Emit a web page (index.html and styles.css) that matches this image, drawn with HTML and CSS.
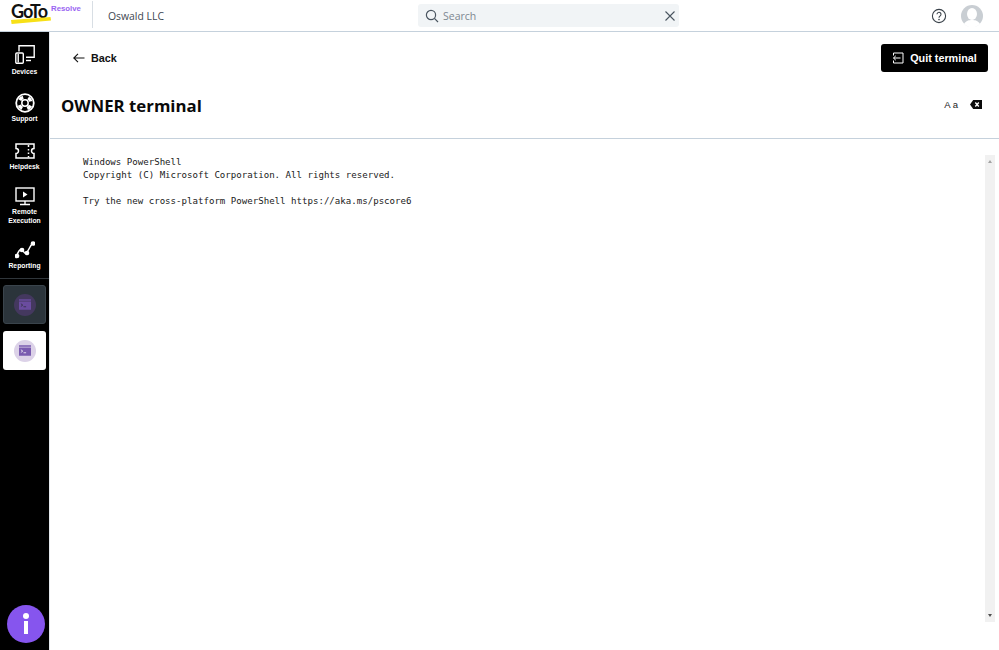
FILE: index.html
```html
<!DOCTYPE html>
<html lang="en">
<head>
<meta charset="utf-8">
<title>OWNER terminal</title>
<link rel="stylesheet" href="styles.css">
</head>
<body>
<header class="topbar">
  <div class="brand">
    <div class="logo">
      <span class="logo-word">GoTo</span>
      <svg class="logo-swoosh" viewBox="0 0 40 7" width="40" height="7"><path d="M0 3 39.500 0 40 3.400 .6 7z" fill="#f7e017"/></svg>
      <span class="logo-product">Resolve</span>
    </div>
    <div class="company">Oswald LLC</div>
  </div>
  <div class="search">
    <svg class="search-icon" viewBox="0 0 14 14" width="14" height="14"><circle cx="6" cy="6" r="4.600" fill="none" stroke="#4a5560" stroke-width="1.200"/><path d="M9.400 9.400 13 13" stroke="#4a5560" stroke-width="1.200"/></svg>
    <span class="search-text">Search</span>
    <svg class="search-clear" viewBox="0 0 10 10" width="10" height="10"><path d="M.5.5l9 9M9.500.5l-9 9" stroke="#4a5560" stroke-width="1.100"/></svg>
  </div>
  <div class="account">
    <svg viewBox="0 0 16 16" width="16" height="16"><circle cx="8" cy="8" r="6.600" fill="none" stroke="#3a424a" stroke-width="1.100"/><path d="M6 6.300a2 2 0 1 1 3.200 1.600C8.400 8.500 8 8.800 8 9.800" fill="none" stroke="#3a424a" stroke-width="1.100"/><circle cx="8" cy="11.600" r=".8" fill="#3a424a"/></svg>
    <svg class="avatar" viewBox="0 0 22 22" width="22" height="22"><circle cx="11" cy="11" r="11" fill="#c9ced3"/><ellipse cx="11" cy="9" rx="5" ry="6" fill="#fff"/><path d="M3 19c2-3.500 5-4 8-4s6 .5 8 4a11 11 0 0 1-16 0z" fill="#fff"/></svg>
  </div>
</header>
<div class="shell">
  <nav class="sidebar">
    <a class="nav-item nav-devices">
      <svg viewBox="0 0 20 19" width="20" height="19" fill="none" stroke="#fff" stroke-width="1.400"><path d="M4 6.500V.8h15.200v11.500H11"/><rect x=".8" y="8" width="7.500" height="10.200" rx="1"/><path d="M3.200 9v8.500"/><path d="M11 15.500h5"/></svg>
      <span>Devices</span>
    </a>
    <a class="nav-item nav-support">
      <svg viewBox="0 0 20 20" width="20" height="20" fill="none" stroke="#fff"><circle cx="10" cy="10" r="8.800" stroke-width="1.800"/><circle cx="10" cy="10" r="3.200" stroke-width="1.500"/><circle cx="10" cy="10" r="6" stroke-width="3.400" stroke-dasharray="4.200 5.220" stroke-dashoffset="6.810"/></svg>
      <span>Support</span>
    </a>
    <a class="nav-item nav-helpdesk">
      <svg viewBox="0 0 20 16" width="20" height="16" fill="none" stroke="#fff" stroke-width="1.500"><path d="M1 1h18v4.500a2.500 2.500 0 0 0 0 5V15H1v-4.500a2.500 2.500 0 0 0 0-5z"/><path d="M13.500 2v2M13.500 6v1.500M13.500 9.500V11M13.500 13v1.500"/></svg>
      <span>Helpdesk</span>
    </a>
    <a class="nav-item nav-remote">
      <svg viewBox="0 0 20 19" width="20" height="19" fill="none" stroke="#fff" stroke-width="1.400"><rect x="1" y="1" width="18" height="13"/><path d="M8 4.500v6l4.500-3z" fill="#fff" stroke="none"/><path d="M10 14v3M5 17.500h10"/></svg>
      <span>Remote Execution</span>
    </a>
    <a class="nav-item nav-reporting">
      <svg viewBox="0 0 20 18" width="20" height="18" fill="none" stroke="#fff" stroke-width="1.500"><path d="M2 15c1-5 3-7 5-6s2 4 4 3 4-7 6-9"/><circle cx="2" cy="15" r="1.600" fill="#fff"/><circle cx="7" cy="9" r="1.600" fill="#fff"/><circle cx="12" cy="12" r="1.600" fill="#fff"/><circle cx="18" cy="2.500" r="1.600" fill="#fff"/></svg>
      <span>Reporting</span>
    </a>
    <div class="session-list">
      <a class="session session-inactive">
        <span class="session-disc">
          <svg viewBox="0 0 16 14" width="16" height="14"><path d="M0 0h16v2H0z" fill="#6a4c9f"/><path d="M0 3h16v11H0z" fill="#6a4c9f"/><path d="M2.500 6l2.500 1.800L2.500 9.600M6 10h3.500" fill="none" stroke="#2b2d3a" stroke-width="1"/></svg>
        </span>
      </a>
      <a class="session session-active">
        <span class="session-disc">
          <svg viewBox="0 0 16 14" width="16" height="14"><path d="M0 0h16v2H0z" fill="#7a5bb0"/><path d="M0 3h16v11H0z" fill="#7a5bb0"/><path d="M2.500 6l2.500 1.800L2.500 9.600M6 10h3.500" fill="none" stroke="#fff" stroke-width="1"/></svg>
        </span>
      </a>
    </div>
    <div class="info-badge"><span class="info-dot"></span><span class="info-stem"></span></div>
  </nav>
  <main class="content">
    <div class="toolbar">
      <a class="back">
        <svg viewBox="0 0 12 10" width="12" height="10" fill="none" stroke="#111" stroke-width="1.100"><path d="M11.500 5H.8M5 .8.800 5 5 9.200"/></svg>
        <span>Back</span>
      </a>
      <button class="quit">
        <svg viewBox="0 0 12 12" width="12" height="12" fill="none" stroke="#fff" stroke-width="1"><path d="M1.500 3.500V1h9.500v10H1.500V8.500"/><path d="M8.500 6H1.500M3.800 3.800 1.500 6l2.300 2.200"/></svg>
        <span>Quit terminal</span>
      </button>
    </div>
    <div class="title-row">
      <h1>OWNER terminal</h1>
      <div class="title-tools">
        <span class="font-size">A a</span>
        <svg viewBox="0 0 12 9" width="12" height="9"><path d="M3.200 0H12v9H3.200L0 4.500z" fill="#0a0a0a"/><path d="M5.300 2.500l3.500 4M8.800 2.500l-3.500 4" stroke="#fff" stroke-width="1.300"/></svg>
      </div>
    </div>
    <div class="terminal">
      <pre class="terminal-text">Windows PowerShell
Copyright (C) Microsoft Corporation. All rights reserved.

Try the new cross-platform PowerShell https://aka.ms/pscore6</pre>
      <div class="scrollbar">
        <span class="arrow arrow-up"></span>
        <span class="arrow arrow-down"></span>
      </div>
    </div>
  </main>
</div>
</body>
</html>
```
FILE: styles.css
```css
* { box-sizing: border-box; }
html, body { height: 100%; }
body {
  margin: 0;
  height: 650px;
  overflow: hidden;
  display: flex;
  flex-direction: column;
  background: #fff;
  color: #0a0a0a;
  font-family: "Liberation Sans", Arial, sans-serif;
}
.topbar {
  height: 32px;
  flex: none;
  display: grid;
  grid-template-columns: 418px 261px 1fr;
  align-items: center;
  border-bottom: 1px solid #c5d1dc;
  background: #fff;
}
.brand { display: flex; align-items: center; height: 31px; }
.logo {
  position: relative;
  width: 93px;
  height: 27px;
  margin-top: -2px;
  border-right: 1px solid #d8dee4;
}
.logo-word {
  position: absolute;
  left: 11px;
  top: 1px;
  font-family: "Lato", sans-serif;
  font-size: 18px;
  font-weight: 700;
  letter-spacing: -1px;
  color: #111;
  line-height: 18px;
}
.logo-swoosh { position: absolute; left: 11px; top: 16px; }
.logo-product {
  position: absolute;
  left: 51px;
  top: 2px;
  font-size: 7.800px;
  font-weight: 700;
  color: #9a66f2;
  line-height: 11px;
}
.company {
  margin-left: 15px;
  font-family: "Open Sans", sans-serif;
  font-size: 10.400px;
  color: #3d4650;
}
.search {
  height: 23px;
  display: flex;
  align-items: center;
  padding: 0 4px 0 7px;
  background: #f1f4f6;
  border-radius: 3px;
}
.search-text {
  flex: 1;
  margin-left: 4px;
  font-family: "Open Sans", sans-serif;
  font-size: 10.500px;
  color: #7d8790;
}
.account {
  display: flex;
  justify-content: flex-end;
  align-items: center;
  gap: 14px;
  padding-right: 16px;
}
.shell { flex: 1; display: flex; min-height: 0; }
.sidebar {
  width: 50px;
  flex: none;
  background: #000;
  border-right: 1px solid #e4e8ec;
  display: flex;
  flex-direction: column;
  align-items: center;
  color: #fff;
}
.nav-item {
  width: 100%;
  display: flex;
  flex-direction: column;
  align-items: center;
  text-align: center;
  font-size: 6.800px;
  font-weight: 700;
  line-height: 9px;
  color: #fff;
}
.nav-item svg { display: block; }
.nav-devices { padding-top: 13px; }
.nav-devices svg { margin-bottom: 3px; }
.nav-support { padding-top: 17px; }
.nav-support svg { margin-bottom: 1px; }
.nav-helpdesk { padding-top: 20px; }
.nav-helpdesk svg { margin-bottom: 3px; }
.nav-remote { padding-top: 16px; padding-inline: 4px; }
.nav-remote svg { margin-bottom: 1px; }
.nav-reporting { padding-top: 16px; }
.nav-reporting svg { margin-bottom: 2px; }
.session-list {
  width: 100%;
  margin-top: 8px;
  padding: 6px 3px 0 3px;
  display: flex;
  flex-direction: column;
  gap: 7px;
  border-top: 1px solid #30363b;
}
.session {
  height: 39px;
  display: flex;
  align-items: center;
  justify-content: center;
  border-radius: 3px;
}
.session-inactive { background: #2b343b; border: 1px solid #3a444c; }
.session-active { background: #fff; }
.session-disc {
  width: 22px;
  height: 22px;
  border-radius: 50%;
  display: flex;
  align-items: center;
  justify-content: center;
}
.session-disc svg { width: 12px; height: 11px; }
.session-inactive .session-disc { background: #44385f; }
.session-active .session-disc { background: #dcd2e8; }
.info-badge {
  position: relative;
  align-self: flex-start;
  margin: auto 0 7px 7px;
  width: 38px;
  height: 38px;
  border-radius: 50%;
  background: #8655ee;
}
.info-dot {
  position: absolute;
  left: 16px;
  top: 8px;
  width: 6px;
  height: 6px;
  border-radius: 50%;
  background: #fff;
}
.info-stem {
  position: absolute;
  left: 17px;
  top: 16px;
  width: 4px;
  height: 13px;
  background: #fff;
}
.content { flex: 1; min-width: 0; display: flex; flex-direction: column; }
.toolbar {
  height: 52px;
  display: flex;
  align-items: flex-start;
  justify-content: space-between;
  padding: 12px 11px 0 23px;
}
.back {
  display: flex;
  align-items: center;
  gap: 6px;
  height: 28px;
  font-size: 10.800px;
  font-weight: 700;
  color: #111;
}
.quit {
  width: 107px;
  height: 28px;
  display: flex;
  align-items: center;
  justify-content: center;
  gap: 6px;
  padding: 0;
  border: 0;
  border-radius: 3px;
  background: #000;
  color: #fff;
  font-family: inherit;
  font-size: 10.800px;
  font-weight: 700;
}
.title-row {
  height: 55px;
  display: flex;
  align-items: flex-start;
  justify-content: space-between;
  padding: 10px 17px 0 11px;
  border-bottom: 1px solid #c5d1dc;
}
h1 {
  margin: 0;
  font-family: "Open Sans", sans-serif;
  font-size: 16.800px;
  font-weight: 700;
  line-height: 24px;
}
.title-tools {
  display: flex;
  align-items: center;
  gap: 12px;
  height: 21px;
}
.font-size { font-size: 9.500px; color: #222; }
.terminal {
  flex: 1;
  min-height: 0;
  display: flex;
  justify-content: space-between;
  padding: 16px 4px 28px 33px;
}
.terminal-text {
  margin: 0;
  padding-top: 1px;
  font-family: "DejaVu Sans Mono", monospace;
  font-size: 9.100px;
  line-height: 13px;
  color: #1a1a1a;
}
.scrollbar {
  width: 10px;
  display: flex;
  flex-direction: column;
  justify-content: space-between;
  align-items: center;
  padding: 5px 0;
  background: #f1f1f1;
}
.arrow { width: 0; height: 0; border-left: 2.500px solid transparent; border-right: 2.500px solid transparent; }
.arrow-up { border-bottom: 3px solid #a3a3a3; }
.arrow-down { border-top: 3px solid #505050; }
```
